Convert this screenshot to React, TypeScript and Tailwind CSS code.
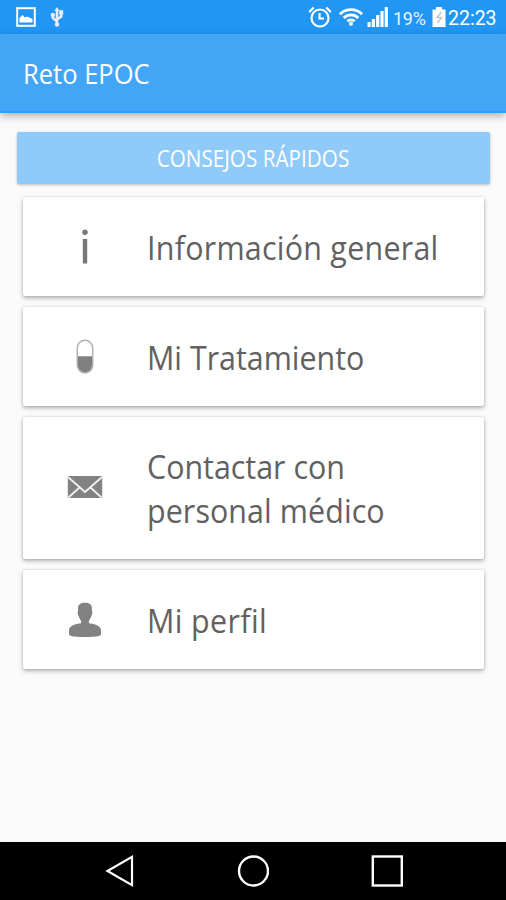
import type { ReactNode } from 'react';

type MenuItem = {
  id: string;
  icon: ReactNode;
  padding: string;
  lines: { text: string; className: string }[];
};

const InfoIcon = () => (
  <svg width="36" height="36" viewBox="0 0 36 36" fill="#777777">
    <circle cx="18" cy="3.2" r="2.7" />
    <rect x="15.8" y="10" width="4.4" height="24.5" />
  </svg>
);

const PillIcon = () => (
  <svg width="36" height="36" viewBox="0 0 36 36" fill="none">
    <rect x="10.3" y="1.2" width="15.4" height="32.8" rx="7.7" stroke="#b0b0b0" strokeWidth="1.5" />
    <path d="M11 17.3h14v9a7 7 0 0 1-14 0z" fill="#808080" />
  </svg>
);

const MailIcon = () => (
  <svg width="36" height="36" viewBox="0 0 36 36" fill="none">
    <rect x="0.8" y="6" width="34.4" height="22" fill="#828282" />
    <path d="M1 7l17 15L35 7M1.5 27.5l11-10M34.5 27.5l-11-10" stroke="#f2f2f2" strokeWidth="1.7" />
  </svg>
);

const UserIcon = () => (
  <svg width="36" height="36" viewBox="0 0 36 36" fill="#828282">
    <path d="M18 0.7c5.200 0 7.200 2.300 7 6.300v2.600c.7.900.4 3.300-.6 4.200-.6 2.200-1.500 3.700-2.500 5v2.500c5.500.8 12.100 2.300 12.100 7.200v3.600c0 1-.8 1.500-2 1.800-6 1.400-22 1.400-28 0-1.200-.3-2-.8-2-1.800v-3.600c0-4.900 6.600-6.400 12.100-7.200v-2.500c-1-1.300-1.900-2.800-2.500-5-1-.9-1.300-3.300-.6-4.200V7c-.2-4 1.800-6.300 7-6.300z" />
  </svg>
);

const menuItems: MenuItem[] = [
  {
    id: 'info',
    icon: <InfoIcon />,
    padding: 'py-[27.5px]',
    lines: [{ text: 'Información general', className: 'tracking-[0.28px]' }],
  },
  {
    id: 'treatment',
    icon: <PillIcon />,
    padding: 'py-[27.5px]',
    lines: [{ text: 'Mi Tratamiento', className: 'tracking-[0px]' }],
  },
  {
    id: 'contact',
    icon: <MailIcon />,
    padding: 'py-[27px]',
    lines: [
      { text: 'Contactar con', className: 'tracking-[0px]' },
      { text: 'personal médico', className: 'tracking-[0.1px]' },
    ],
  },
  {
    id: 'profile',
    icon: <UserIcon />,
    padding: 'py-[27.5px]',
    lines: [{ text: 'Mi perfil', className: 'tracking-[0.4px]' }],
  },
];

const StatusBar = () => (
  <div className="flex h-[34px] items-center bg-[#2196f3] pl-4 pr-[9px] text-white">
    {/* Notifications */}
    <svg width="20" height="20" viewBox="0 0 20 20" fill="none">
      <rect x="1.2" y="1.2" width="17.6" height="17.6" stroke="#fff" strokeWidth="2" />
      <path d="M3.5 15.5V11l3-3 2.500 2.500 2-1 5.500 2.500v3.500z" fill="#fff" />
    </svg>
    <svg className="ml-[14px]" width="14" height="20" viewBox="0 0 14 20" fill="none" stroke="#e4eeff" strokeWidth="2.6">
      <path d="M7 18V3M7 14.5L2.800 11V8M7 12.500l4.200-3V6" />
      <path d="M7 0l2.600 4H4.400z" fill="#e4eeff" stroke="none" />
      <circle cx="2.8" cy="8" r="2.2" fill="#e4eeff" stroke="none" />
      <circle cx="7" cy="17.5" r="2.2" fill="#e4eeff" stroke="none" />
      <rect x="9.2" y="3.2" width="4" height="4.4" fill="#e4eeff" stroke="none" />
    </svg>

    {/* System icons */}
    <div className="ml-auto flex items-center">
      <svg width="24" height="22" viewBox="0 0 24 22" fill="none" stroke="#fff" strokeWidth="2.2">
        <circle cx="12" cy="12" r="8.5" />
        <path d="M11.5 7v5.500h4.500" />
        <path d="M1.2 6l4.600-4.500M22.800 6l-4.600-4.500" />
      </svg>
      <svg className="ml-[7px]" width="24" height="18" viewBox="0 0 24 18" fill="none" stroke="#fff" strokeWidth="2.8">
        <path d="M1 6.200c6-6 16-6 22 0M4.700 9.900c4-4 10.600-4 14.600 0M8.300 13.300c2-2 5.400-2 7.400 0" />
        <circle cx="12" cy="15.8" r="2" fill="#fff" stroke="none" />
      </svg>
      <svg className="ml-[4px]" width="22" height="20" viewBox="0 0 22 20" fill="#fff">
        <rect x="0.5" y="15" width="3.2" height="5" />
        <rect x="4.8" y="12" width="3.2" height="8" />
        <rect x="9.1" y="8" width="3.2" height="12" />
        <rect x="13.4" y="4" width="3.2" height="16" />
        <rect x="17.7" y="0" width="3.2" height="20" />
      </svg>
      <span className="ml-[4px] mt-[3px] w-[34px] whitespace-nowrap text-[18px] leading-[34px] tracking-[-0.3px] opacity-90 [font-family:Roboto,sans-serif]">
        19%
      </span>
      <svg className="ml-[5px]" width="14" height="20" viewBox="0 0 14 20">
        <path d="M4 0h6v2.500h3.500V20H.5V2.500H4z" fill="#fff" />
        <path d="M9.5 5L5 10.500h4.500L5.500 16" fill="none" stroke="#c9c4c8" strokeWidth="1.5" />
      </svg>
      <span className="ml-[2px] mt-[3px] w-[49px] whitespace-nowrap text-[19.5px] leading-[34px] [font-family:Roboto,sans-serif]">
        22:23
      </span>
    </div>
  </div>
);

const NavigationBar = () => (
  <div className="flex h-[58px] items-center justify-center gap-[102px] bg-black">
    <svg width="32" height="34" viewBox="0 0 32 34" fill="none" stroke="#fff" strokeWidth="2.2">
      <path d="M4.5 17L29 2.800v28.400z" />
    </svg>
    <svg width="32" height="34" viewBox="0 0 32 34" fill="none" stroke="#fff" strokeWidth="2.4">
      <circle cx="16.5" cy="17" r="14.5" />
    </svg>
    <svg width="32" height="34" viewBox="0 0 32 34" fill="none" stroke="#fff" strokeWidth="2.4">
      <rect x="1.8" y="2.5" width="29" height="29" />
    </svg>
  </div>
);

export default function App() {
  return (
    <div className="flex h-[900px] w-[506px] flex-col overflow-hidden bg-[#fafafa] [font-family:'Open_Sans','Noto_Sans',sans-serif]">
      <StatusBar />

      {/* Header */}
      <header className="flex h-[79px] items-center border-b-2 border-[#2da0fa] bg-[#42a5f5] pl-[23px] pt-[4px] text-white shadow-[0_3px_8px_rgba(0,0,0,0.3)]">
        <h1 className="origin-left scale-x-[0.945] whitespace-nowrap text-[27px]">Reto EPOC</h1>
      </header>

      <main className="flex flex-1 flex-col pt-[19px]">
        <button className="mx-auto h-[52px] w-[473px] rounded-[2px] bg-[#90caf9] text-[23px] text-white shadow-[0_1px_3px_rgba(0,0,0,0.25)]">
          <span className="inline-block scale-x-[0.9]">CONSEJOS RÁPIDOS</span>
        </button>

        {/* Menu */}
        <div className="mt-[13px] flex flex-col gap-[11px] pl-[23px] pr-[22px]">
          {menuItems.map((item) => (
            <div
              key={item.id}
              className={`flex items-center rounded-[2px] bg-white pl-[44px] text-[#616161] shadow-[0_2px_4px_rgba(0,0,0,0.3),0_0_2px_rgba(0,0,0,0.15)] ${item.padding}`}
            >
              {item.icon}
              <div className="ml-[44px] translate-y-px text-[32px] leading-[44px]">
                {item.lines.map((line) => (
                  <p key={line.text} className={`w-max origin-left scale-x-[0.95] ${line.className}`}>
                    {line.text}
                  </p>
                ))}
              </div>
            </div>
          ))}
        </div>
      </main>

      <NavigationBar />
    </div>
  );
}
